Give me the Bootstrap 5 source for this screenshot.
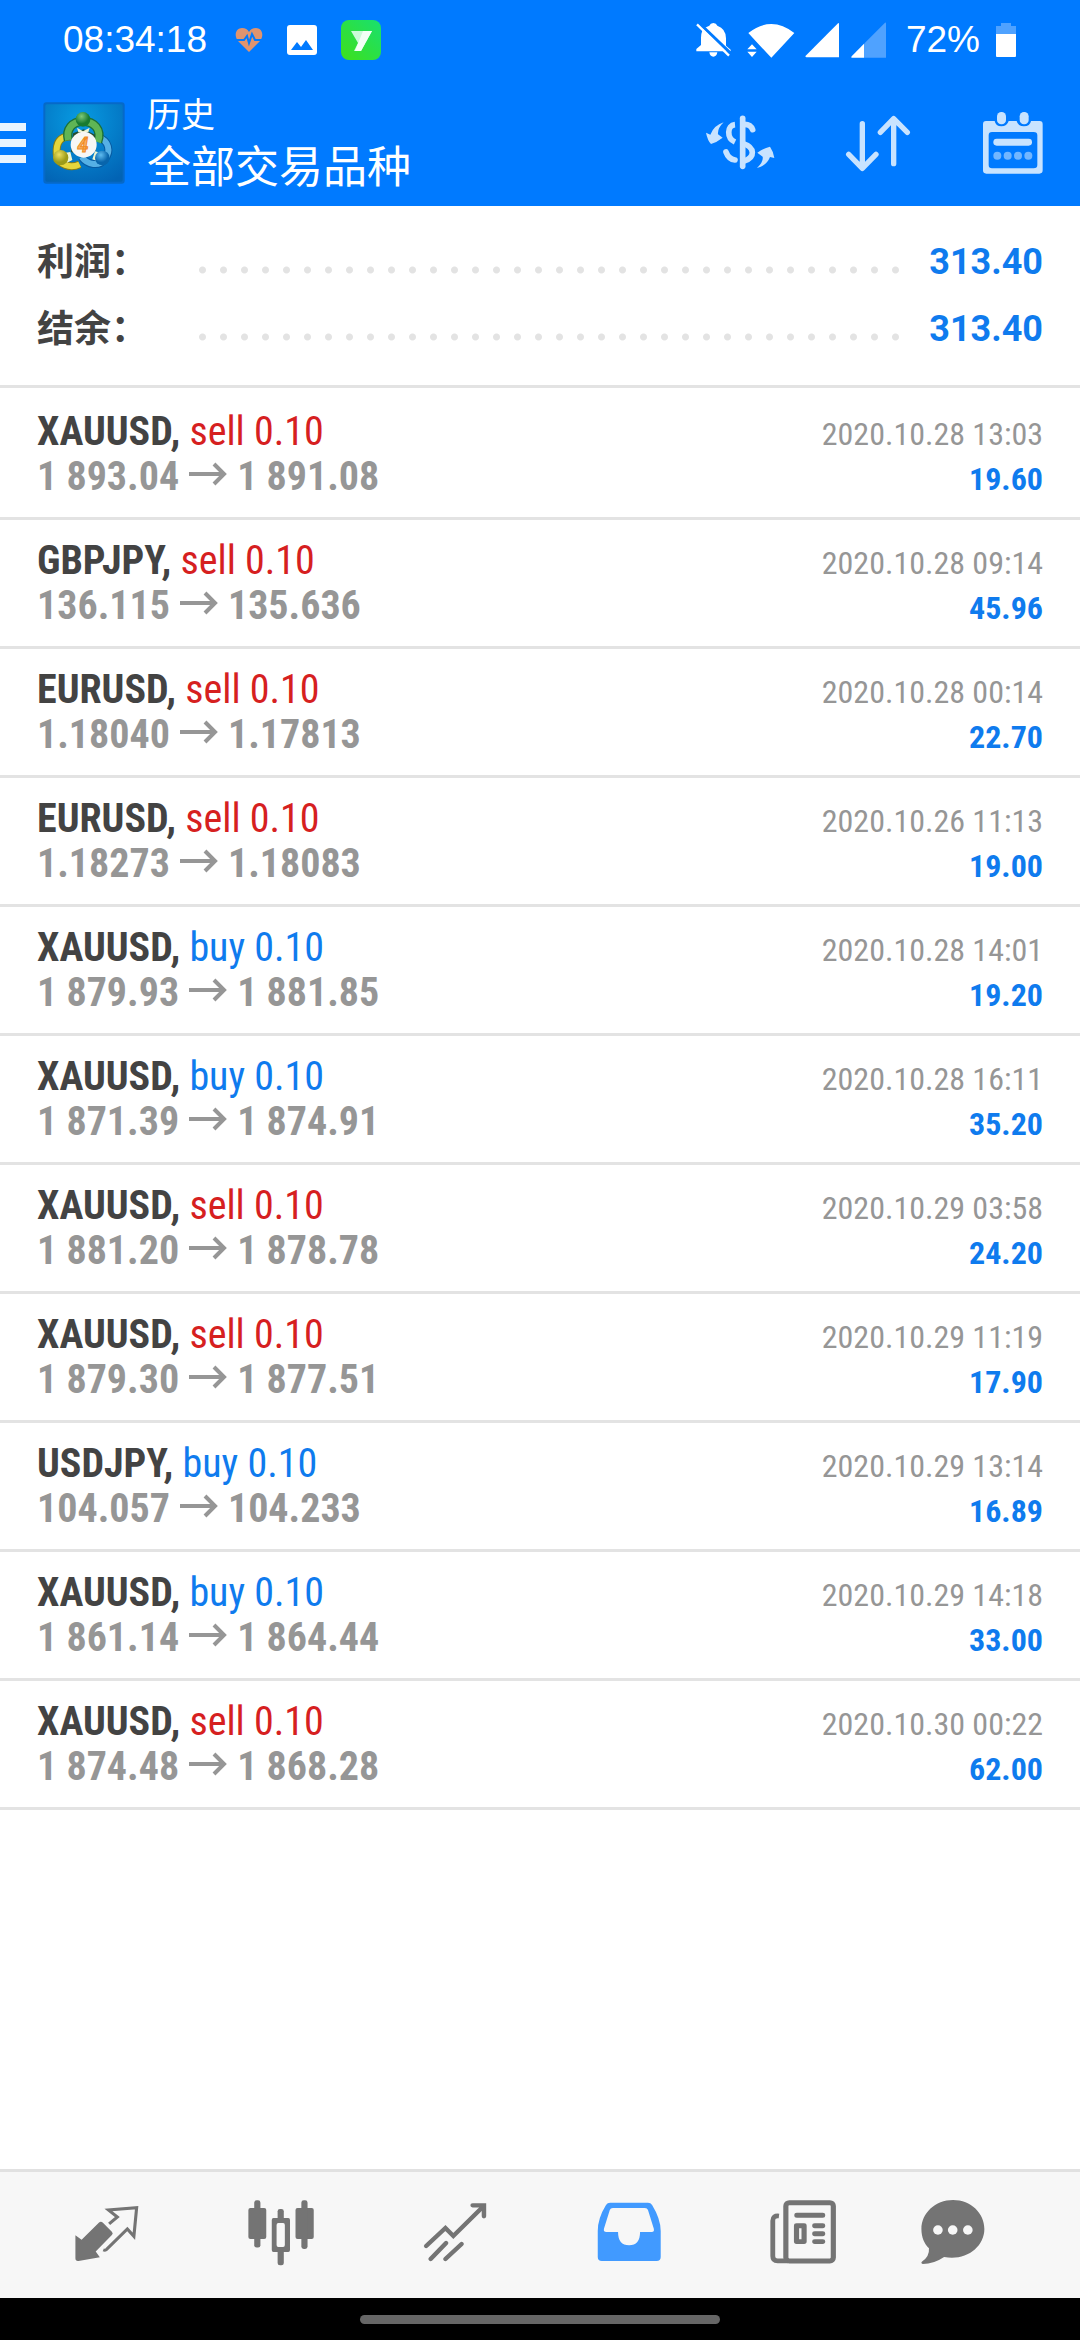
<!DOCTYPE html>
<html lang="zh-CN">
<head>
<meta charset="utf-8">
<meta name="viewport" content="width=device-width, initial-scale=1">
<title>历史</title>
<link href="https://cdn.jsdelivr.net/npm/bootstrap@5.3.0/dist/css/bootstrap.min.css" rel="stylesheet">
<style>
:root{--brand:#007aff;--icon:#c8e3ff;--rule:#e3e3e3}
body{font-family:"Roboto Condensed","Liberation Sans Narrow",Roboto,"Noto Sans CJK SC",sans-serif;background:#fff;color:#434343}
svg{display:block;flex:none}
.topbar{background:var(--brand);color:#fff}
.status{height:80px;padding:0 64px 0 63px;font-family:"Liberation Sans",sans-serif;font-size:37px;line-height:54px}
.notices{gap:24px;margin-left:28px}
.signals{gap:12px}
.toolbar{height:126px;padding-right:36px}
.menu-btn,.tool-btn,.tab-btn{border:0;background:none;padding:0}
.menu-btn{width:43px}
.title-box{font-family:Roboto,"Noto Sans CJK SC",sans-serif;margin-left:22px}
.title-small{font-size:34px;line-height:50px}
.title-big{font-size:44px;line-height:56px}
.tools{gap:71px}
.summary{padding:22px 37px 23px;border-bottom:3px solid var(--rule)}
.sum-line{height:67px;line-height:44px;font-size:36px;font-weight:700}
.sum-label{width:155px;padding-bottom:6px;font-size:37px;font-family:"Noto Sans CJK SC",sans-serif}
.dots{height:8px;margin:16px 22px 0 0;background:radial-gradient(circle,#e3e3e3 3px,transparent 4px) 0 0/21px 8px repeat-x}
.amount{font-family:Roboto,sans-serif;color:#0f7bee}
.trade{padding:18px 37px;border-bottom:3px solid var(--rule)}
.trade:first-child{padding-top:21px}
.line{height:45px;font-size:40px;line-height:45px}
.sym{font-weight:700}
.sell{color:#d6201f}
.buy{color:#0f7bee}
.prices{font-weight:700;color:#969696}
.prices svg{display:inline-block;margin:0 10px;vertical-align:4px}
.time{font-size:32px;color:#969696}
.gain{font-size:32px;font-weight:700;color:#0f7bee}
.tabs{display:grid;grid-template-columns:repeat(5,173fr) 125fr;height:129px;padding:0 64px 6px 20px;background:#f7f7f7;border-top:3px solid #e1e1e1;color:#747474}
.tab-btn{color:inherit;display:flex;align-items:center;justify-content:center}
.tab-btn.active{color:#419aff}
.sysbar{height:42px;background:#000}
.handle{width:33.3333%;height:9px;border-radius:5px;background:#666}
</style>
</head>
<body>
<div class="min-vh-100 d-flex flex-column">
<header class="topbar">
  <div class="status d-flex align-items-center">
    <span>08:34:18</span>
    <div class="notices d-flex align-items-center">
    <svg width="28" height="28" viewBox="0 0 28 28"><path d="M14 26 3 15C-2 8 2 2 7 2q5 0 7 4 2-4 7-4c5 0 9 6 4 13z" fill="#e0946e"/><path d="M0 14h9l3-4 2 7 3-9 3 6h8" fill="none" stroke="#007aff" stroke-width="2"/></svg>
    <svg width="30" height="30" viewBox="0 0 30 30"><rect width="30" height="30" rx="3" fill="#fff"/><path d="M4 25l6-8 4 5 5-7 7 10z" fill="#007aff"/></svg>
    <svg width="40" height="40" viewBox="0 0 40 40"><defs><linearGradient id="gr" x1="1" y1="0" x2="0" y2="1"><stop stop-color="#18e070"/><stop offset="1" stop-color="#3ee01a"/></linearGradient></defs><rect width="40" height="40" rx="8" fill="url(#gr)"/><path d="M10 11h21L20 31h-7l4-8z" fill="#c9fbd8"/><path d="M22 11h9L20 31h-6z" fill="#f2fff6"/></svg>
    </div>
    <div class="signals ms-auto d-flex align-items-center">
      <svg class="me-1" width="36" height="36" viewBox="164 65 108 108"><path fill="#fff" d="M207 76q3-8 12-8t12 8q26 9 26 38v22l14 12v5H168v-7l14-12v-22q0-23 12-30zM207 156h24q-2 13-12 13t-12-13z"/><path d="M174 66 274 162" stroke="#007aff" stroke-width="9"/><path d="m170 72 96 94" stroke="#fff" stroke-width="7"/></svg>
      <svg width="48" height="36" viewBox="328 65 144 108"><path fill="#fff" d="M332 98Q401 44 470 98L401 172 365 134l-9-10zM343 132l14 15h-28zM329 154h28l-14 16z"/></svg>
      <svg width="32" height="36" viewBox="498 67 99 108" overflow="visible"><path fill="#fff" d="M594 69q3-2 3 3v102H496q-5 0-2-4z"/></svg>
      <svg width="35" height="36" viewBox="630 67 105 108"><path fill="#4fa2ff" d="M732 69q3-2 3 3v102h-66v-42z"/><path fill="#fff" d="m669 132v42h-35q-5 0-2-4z"/></svg>
      <span class="ms-2 me-1">72%</span>
      <svg width="20" height="36" viewBox="0 0 20 36"><path fill="#4fa2ff" d="M0 4h5V1h10v3h5v9H0z"/><path fill="#fff" d="M0 12h20v22q0 1-1 1H1q-1 0-1-1z"/></svg>
    </div>
  </div>
  <div class="toolbar d-flex align-items-center">
    <button class="menu-btn" aria-label="菜单"><svg width="26" height="40" viewBox="0 0 26 40"><path fill="#e8f4ff" d="M0 0h26v8H0zM0 16h26v8H0zM0 32h26v8H0z"/></svg></button>
    <svg width="82" height="82" viewBox="40 50 246 246"><defs>
      <radialGradient id="bg" cx=".45" cy=".2" r=".9"><stop stop-color="#079be2"/><stop offset="1" stop-color="#0263b4"/></radialGradient>
      <radialGradient id="g1" cx=".4" cy=".3"><stop stop-color="#7fca78"/><stop offset="1" stop-color="#187b31"/></radialGradient>
      <radialGradient id="y1" cx=".4" cy=".3"><stop stop-color="#eee060"/><stop offset="1" stop-color="#9c9b18"/></radialGradient>
      <radialGradient id="b1" cx=".4" cy=".3"><stop stop-color="#5fbcf0"/><stop offset="1" stop-color="#0865ac"/></radialGradient></defs>
      <rect x="41" y="51" width="244" height="244" rx="9" fill="#0669c8"/><rect x="47" y="57" width="232" height="232" rx="5" fill="url(#bg)"/>
      <path d="M125 154c-36-3-46 20-44 52 4 34 42 44 69 31" fill="none" stroke="#857d17" stroke-width="24"/>
      <path d="M125 154c-36-3-46 20-44 52 4 34 42 44 69 31" fill="none" stroke="#e5d63c" stroke-width="18"/>
      <path d="M206 155c32 12 38 42 20 66-18 24-52 18-70-6" fill="none" stroke="#075ba2" stroke-width="24"/>
      <path d="M206 155c32 12 38 42 20 66-18 24-52 18-70-6" fill="none" stroke="#55b0e5" stroke-width="18"/>
      <path d="M116 164c-8-32 12-56 44-56s58 24 44 62" fill="none" stroke="#1b7037" stroke-width="28"/>
      <path d="M116 164c-8-32 12-56 44-56s58 24 44 62" fill="none" stroke="#5fb555" stroke-width="20"/>
      <path d="m130 144 32-12 34 16 2 48-36 14-38-10z" fill="#244f32"/>
      <path d="m142 127 18 11 20-11-4 14h-30zM108 202l14-2 6 24-16 8zM212 202l-16-4-8 24 16 6z" fill="#eef5d2"/>
      <circle cx="160" cy="102" r="22" fill="url(#g1)"/><circle cx="93" cy="217" r="23" fill="url(#y1)"/><circle cx="218" cy="218" r="22" fill="url(#b1)"/>
      <circle cx="162" cy="178" r="39" fill="#f7f7f5"/><text x="160" y="199" text-anchor="middle" font-family="Roboto" font-style="italic" font-weight="700" font-size="58" fill="#fbb066" stroke="#ef8b22" stroke-width="3">4</text></svg>
    <div class="title-box">
      <div class="title-small">历史</div>
      <h1 class="title-big fw-normal mb-0">全部交易品种</h1>
    </div>
    <div class="tools d-flex align-items-center ms-auto">
      <button class="tool-btn" aria-label="货币"><svg width="70" height="62" viewBox="192 333 210 186" overflow="visible"><g fill="none" stroke="#c8e3ff" stroke-width="17"><path stroke-linecap="round" d="M308 352v144"/><path d="M285 371c-24 2-26 40 0 52"/><path stroke-linecap="round" d="M314 370q18 0 24 16M258 453q8 22 27 24"/><path d="M308 427c38 12 38 42 4 53"/></g><path fill="#c8e3ff" d="M251 364q-19 18-17 36l14 10q-18 14-35 19-10-10-15-34l13 6q11-28 40-37zM351 501q20-18 17-34l-16-12q20-14 38-18 10 14 13 34l-13-3q-10 26-39 33z"/></svg></button>
      <button class="tool-btn" aria-label="排序"><svg width="66" height="62" viewBox="609 333 198 186"><path fill="none" stroke="#c8e3ff" stroke-width="16" stroke-linecap="round" stroke-linejoin="round" d="M661 368v132m-41-40 41 42 41-42M755 488V354m-40 40 40-41 41 41"/></svg></button>
      <button class="tool-btn" aria-label="日历"><svg width="62" height="62" viewBox="1024 333 186 186"><path fill="#c8e3ff" fill-rule="evenodd" d="M1036 360h26q3 16 20 16t22-16h24q4 16 22 16t21-16h26q9 0 9 10v138q0 10-10 10h-159q-10 0-10-10V370q0-10 9-10zm18 33q-10 0-10 10v89q0 10 10 10h125q11 0 11-10v-89q0-10-11-10z"/><rect x="1069" y="333" width="27" height="37" rx="13" fill="#c8e3ff"/><rect x="1137" y="333" width="27" height="37" rx="13" fill="#c8e3ff"/><rect x="1058" y="413" width="116" height="21" rx="10" fill="#c8e3ff"/><g fill="#72b6ff"><circle cx="1070" cy="464" r="12"/><circle cx="1101" cy="464" r="12"/><circle cx="1132" cy="464" r="12"/><circle cx="1163" cy="464" r="12"/></g></svg></button>
    </div>
  </div>
</header>
<main class="flex-grow-1">
  <svg width="0" height="0" class="position-absolute"><symbol id="arr" viewBox="0 0 38 24"><path d="M0 12h35M25 2l10 10-10 10" fill="none" stroke="#969696" stroke-width="4"/></symbol></svg>
  <section class="summary">
    <div class="sum-line d-flex align-items-center"><span class="sum-label">利润：</span><span class="dots flex-grow-1"></span><span class="amount">313.40</span></div>
    <div class="sum-line d-flex align-items-center"><span class="sum-label">结余：</span><span class="dots flex-grow-1"></span><span class="amount">313.40</span></div>
  </section>
  <ul class="list-unstyled mb-0">
    <li class="trade"><div class="line d-flex justify-content-between align-items-baseline"><span><span class="sym">XAUUSD,</span> <span class="sell">sell 0.10</span></span><span class="time">2020.10.28 13:03</span></div><div class="line d-flex justify-content-between align-items-baseline"><span class="prices">1 893.04<svg width="38" height="24"><use href="#arr"/></svg>1 891.08</span><span class="gain">19.60</span></div></li>
    <li class="trade"><div class="line d-flex justify-content-between align-items-baseline"><span><span class="sym">GBPJPY,</span> <span class="sell">sell 0.10</span></span><span class="time">2020.10.28 09:14</span></div><div class="line d-flex justify-content-between align-items-baseline"><span class="prices">136.115<svg width="38" height="24"><use href="#arr"/></svg>135.636</span><span class="gain">45.96</span></div></li>
    <li class="trade"><div class="line d-flex justify-content-between align-items-baseline"><span><span class="sym">EURUSD,</span> <span class="sell">sell 0.10</span></span><span class="time">2020.10.28 00:14</span></div><div class="line d-flex justify-content-between align-items-baseline"><span class="prices">1.18040<svg width="38" height="24"><use href="#arr"/></svg>1.17813</span><span class="gain">22.70</span></div></li>
    <li class="trade"><div class="line d-flex justify-content-between align-items-baseline"><span><span class="sym">EURUSD,</span> <span class="sell">sell 0.10</span></span><span class="time">2020.10.26 11:13</span></div><div class="line d-flex justify-content-between align-items-baseline"><span class="prices">1.18273<svg width="38" height="24"><use href="#arr"/></svg>1.18083</span><span class="gain">19.00</span></div></li>
    <li class="trade"><div class="line d-flex justify-content-between align-items-baseline"><span><span class="sym">XAUUSD,</span> <span class="buy">buy 0.10</span></span><span class="time">2020.10.28 14:01</span></div><div class="line d-flex justify-content-between align-items-baseline"><span class="prices">1 879.93<svg width="38" height="24"><use href="#arr"/></svg>1 881.85</span><span class="gain">19.20</span></div></li>
    <li class="trade"><div class="line d-flex justify-content-between align-items-baseline"><span><span class="sym">XAUUSD,</span> <span class="buy">buy 0.10</span></span><span class="time">2020.10.28 16:11</span></div><div class="line d-flex justify-content-between align-items-baseline"><span class="prices">1 871.39<svg width="38" height="24"><use href="#arr"/></svg>1 874.91</span><span class="gain">35.20</span></div></li>
    <li class="trade"><div class="line d-flex justify-content-between align-items-baseline"><span><span class="sym">XAUUSD,</span> <span class="sell">sell 0.10</span></span><span class="time">2020.10.29 03:58</span></div><div class="line d-flex justify-content-between align-items-baseline"><span class="prices">1 881.20<svg width="38" height="24"><use href="#arr"/></svg>1 878.78</span><span class="gain">24.20</span></div></li>
    <li class="trade"><div class="line d-flex justify-content-between align-items-baseline"><span><span class="sym">XAUUSD,</span> <span class="sell">sell 0.10</span></span><span class="time">2020.10.29 11:19</span></div><div class="line d-flex justify-content-between align-items-baseline"><span class="prices">1 879.30<svg width="38" height="24"><use href="#arr"/></svg>1 877.51</span><span class="gain">17.90</span></div></li>
    <li class="trade"><div class="line d-flex justify-content-between align-items-baseline"><span><span class="sym">USDJPY,</span> <span class="buy">buy 0.10</span></span><span class="time">2020.10.29 13:14</span></div><div class="line d-flex justify-content-between align-items-baseline"><span class="prices">104.057<svg width="38" height="24"><use href="#arr"/></svg>104.233</span><span class="gain">16.89</span></div></li>
    <li class="trade"><div class="line d-flex justify-content-between align-items-baseline"><span><span class="sym">XAUUSD,</span> <span class="buy">buy 0.10</span></span><span class="time">2020.10.29 14:18</span></div><div class="line d-flex justify-content-between align-items-baseline"><span class="prices">1 861.14<svg width="38" height="24"><use href="#arr"/></svg>1 864.44</span><span class="gain">33.00</span></div></li>
    <li class="trade"><div class="line d-flex justify-content-between align-items-baseline"><span><span class="sym">XAUUSD,</span> <span class="sell">sell 0.10</span></span><span class="time">2020.10.30 00:22</span></div><div class="line d-flex justify-content-between align-items-baseline"><span class="prices">1 874.48<svg width="38" height="24"><use href="#arr"/></svg>1 868.28</span><span class="gain">62.00</span></div></li>
  </ul>
</main>
<nav class="tabs">
  <button class="tab-btn" aria-label="行情"><svg width="68" height="68" viewBox="0 0 68 68"><g transform="scale(.344 .333) translate(-214 -144)"><path fill="currentColor" d="M221 256l18 13 50-51q6-6 12 0l26 27q5 5 0 10l-47 50 12 17-62 11q-9 1-9-8z"/><path fill="none" stroke="currentColor" stroke-width="9" d="M319 222l24-21-26-21 82-7-8 86-19-22-61 62q-4 3-9 1"/></g></svg></button>
  <button class="tab-btn" aria-label="图表"><svg width="68" height="68" viewBox="0 0 68 68"><g transform="scale(.344 .333) translate(-715 -144)" fill="currentColor"><rect x="719" y="174" width="52" height="93" rx="6"/><rect x="736" y="151" width="18" height="142" rx="7"/><rect x="856" y="174" width="53" height="93" rx="6"/><rect x="873" y="151" width="18" height="146" rx="7"/><rect x="804" y="177" width="18" height="35" rx="7"/><rect x="804" y="298" width="18" height="48" rx="7"/><path fill-rule="evenodd" d="M792 204h43q5 0 5 6v90q0 6-5 6h-43q-5 0-5-6v-90q0-6 5-6zm14 15q-5 0-5 6v60q0 6 5 6h14q5 0 5-6v-60q0-6-5-6z"/></g></svg></button>
  <button class="tab-btn" aria-label="交易"><svg width="68" height="68" viewBox="0 0 68 68"><g transform="scale(.344 .333) translate(-1217 -144)" fill="none" stroke="currentColor" stroke-width="13" stroke-linecap="round"><path d="M1232 288l56-54 23 24 86-88M1245 327l45-48M1288 327l47-45"/><path d="M1367 166h33v33"/><path fill="currentColor" stroke="none" d="M1380 165h25v30z"/></g></svg></button>
  <button class="tab-btn active" aria-label="历史" aria-current="page"><svg width="68" height="68" viewBox="0 0 68 68"><g transform="scale(.344 .333) translate(-154 -144)"><path fill="currentColor" fill-rule="evenodd" d="M198 158h110q8 0 12 7 25 42 25 78v78q0 12-12 12H174q-12 0-12-12v-78q0-38 24-78 4-7 12-7zm8 16q-7 0-9 6l-17 56q-2 10 7 10h34q0 40 32 40t32-40h34q8 0 6-10l-17-56q-2-6-9-6z"/></g></svg></button>
  <button class="tab-btn" aria-label="新闻"><svg width="68" height="68" viewBox="0 0 68 68"><g transform="scale(.344 .333) translate(-661 -144)" fill="none" stroke="currentColor"><rect x="710" y="158" width="138" height="175" rx="10" stroke-width="15"/><path stroke-width="14" d="M690 198q-18-2-18 14v107q0 14 14 14h30"/><path stroke-width="15" stroke-linecap="round" d="M742 196h75M794 227h23M794 251h23M794 275h23"/><rect x="741" y="227" width="22" height="48" stroke-width="15" stroke-linejoin="round"/></g></svg></button>
  <button class="tab-btn" aria-label="消息"><svg width="68" height="68" viewBox="0 0 68 68"><g transform="scale(.344 .333) translate(-1095 -144)"><path fill="currentColor" d="M1194 150c52 0 91 40 91 87 0 55-55 97-117 84q-30 21-62 21-7-2-2-7 22-16 20-40c-14-14-22-34-22-58 0-47 40-87 92-87z"/><g fill="#f7f7f7"><circle cx="1150" cy="240" r="14"/><circle cx="1193" cy="240" r="14"/><circle cx="1237" cy="240" r="14"/></g></g></svg></button>
</nav>
<div class="sysbar d-flex justify-content-center align-items-center"><div class="handle"></div></div>
</div>
<script src="https://cdn.jsdelivr.net/npm/bootstrap@5.3.0/dist/js/bootstrap.bundle.min.js"></script>
</body>
</html>
